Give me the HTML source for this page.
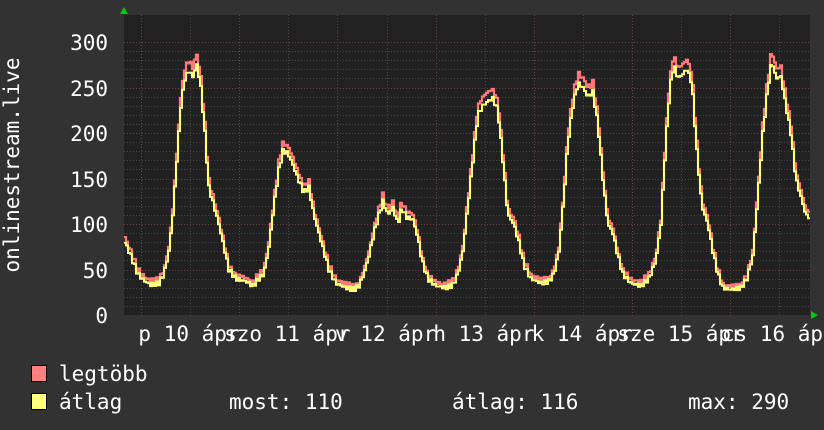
<!DOCTYPE html>
<html><head><meta charset="utf-8"><style>
html,body{margin:0;padding:0;background:#323232;}
svg{display:block}
text{font-family:"DejaVu Sans Mono","Liberation Mono",monospace;fill:#fff;font-size:21px}
</style></head><body>
<svg id="s" width="824" height="430" viewBox="0 0 824 430" xmlns="http://www.w3.org/2000/svg">
<rect width="824" height="430" fill="#323232"/>
<rect x="124" y="15" width="686" height="300" fill="#212121"/>
<g id="grid"></g>
<polyline id="mx" fill="none" stroke="#ff7878" stroke-width="2.2"/>
<polyline id="av" fill="none" stroke="#ffff78" stroke-width="2"/>
<polygon points="120,14 128,14 124,7" fill="#00cc00"/>
<polygon points="811,311 811,319 818,315" fill="#00cc00"/>
<g text-anchor="end">
<text x="108" y="50">300</text><text x="108" y="96">250</text><text x="108" y="141">200</text>
<text x="108" y="187">150</text><text x="108" y="232">100</text><text x="108" y="278">50</text>
<text x="108" y="323">0</text>
</g>
<text transform="translate(19,165) rotate(-90)" text-anchor="middle">onlinestream.live</text>
<g id="xl"></g>
<rect x="31.5" y="365.5" width="15" height="16" fill="#ff8080" stroke="#000"/>
<rect x="31.5" y="393.5" width="15" height="16" fill="#ffff80" stroke="#000"/>
<text x="59" y="381">legtöbb</text>
<text x="59" y="409">átlag</text>
<text x="229" y="409">most: 110</text>
<text x="452" y="409">átlag: 116</text>
<text x="688" y="409">max: 290</text>
</svg>
<script>
var NS="http://www.w3.org/2000/svg",g=document.getElementById('grid');
function ln(x1,y1,x2,y2,c,d){var l=document.createElementNS(NS,'line');l.setAttribute('x1',x1);l.setAttribute('y1',y1);l.setAttribute('x2',x2);l.setAttribute('y2',y2);l.setAttribute('stroke',c);l.setAttribute('stroke-width',1);l.setAttribute('stroke-dasharray',d);g.appendChild(l);}
for(var v=10;v<=300;v+=10){var y=Math.round(315-v*0.91)+0.5;ln(124,y,810,y,v%50==0?'#6a4040':'#464646','1,2');}
for(var i=0;i<14;i++){var x=Math.round(141+i*49.1)+0.5;if(x>809)break;ln(x,15,x,318,i%2==0?'#6a4040':'#464646','1,2');}
var k=[[124,80],[130,65],[137,45],[143,38],[150,33],[158,35],[163,45],[168,70],[172,110],[176,170],[180,230],[184,260],[188,268],[192,262],[196,275],[200,250],[204,200],[208,140],[213,120],[218,100],[223,75],[228,50],[235,40],[245,37],[252,32],[258,40],[263,45],[268,75],[273,120],[278,160],[282,180],[287,178],[292,165],[297,150],[303,135],[308,140],[313,110],[318,90],[323,70],[328,50],[335,35],[345,30],[353,28],[358,32],[363,45],[368,65],[373,90],[378,110],[382,125],[387,110],[392,118],[397,100],[401,118],[405,108],[412,105],[417,85],[421,60],[427,40],[435,32],[445,30],[452,33],[457,45],[462,70],[467,120],[472,170],[477,220],[482,230],[487,235],[492,238],[497,225],[502,170],[507,110],[513,100],[518,80],[523,55],[530,40],[540,35],[548,37],[553,45],[558,70],[563,130],[567,190],[572,230],[577,255],[582,250],[587,240],[592,245],[597,210],[602,150],[607,100],[612,90],[617,65],[622,45],[630,35],[640,32],[648,40],[655,60],[660,100],[665,190],[669,250],[673,275],[677,260],[682,265],[686,270],[691,255],[696,180],[701,120],[707,100],[712,70],[717,45],[722,30],[730,28],[740,30],[746,40],[752,65],[757,130],[762,200],[767,250],[771,280],[775,260],[780,262],[785,230],[790,200],[795,150],[800,130],[805,110],[808,108]];
function val(x){for(var i=0;i<k.length-1;i++){if(x<=k[i+1][0]){var t=(x-k[i][0])/(k[i+1][0]-k[i][0]);return k[i][1]+t*(k[i+1][1]-k[i][1]);}}return k[k.length-1][1];}
var a=[],m=[];
for(var x=124;x<=808;x+=2){var v=val(x),n=Math.sin(x*1.7)*2.5;var ya=315-(v+n)*0.91,ym=315-(v*1.03+1+n+Math.abs(Math.sin(x*0.9))*3)*0.91;a.push(x+','+ya.toFixed(1),(x+2)+','+ya.toFixed(1));m.push(x+','+ym.toFixed(1),(x+2)+','+ym.toFixed(1));}
document.getElementById('av').setAttribute('points',a.join(' '));
document.getElementById('mx').setAttribute('points',m.join(' '));
var xl=document.getElementById('xl'),wd=['p','szo','v','h','k','sze','cs'];
function tx(s,x){var t=document.createElementNS(NS,'text');t.setAttribute('x',x);t.setAttribute('y',341);t.setAttribute('text-anchor','middle');t.textContent=s;xl.appendChild(t);}
for(var i=0;i<7;i++){tx(wd[i]+' '+(10+i)+' ápr',189+i*98.3);}
</script>
</body></html>
